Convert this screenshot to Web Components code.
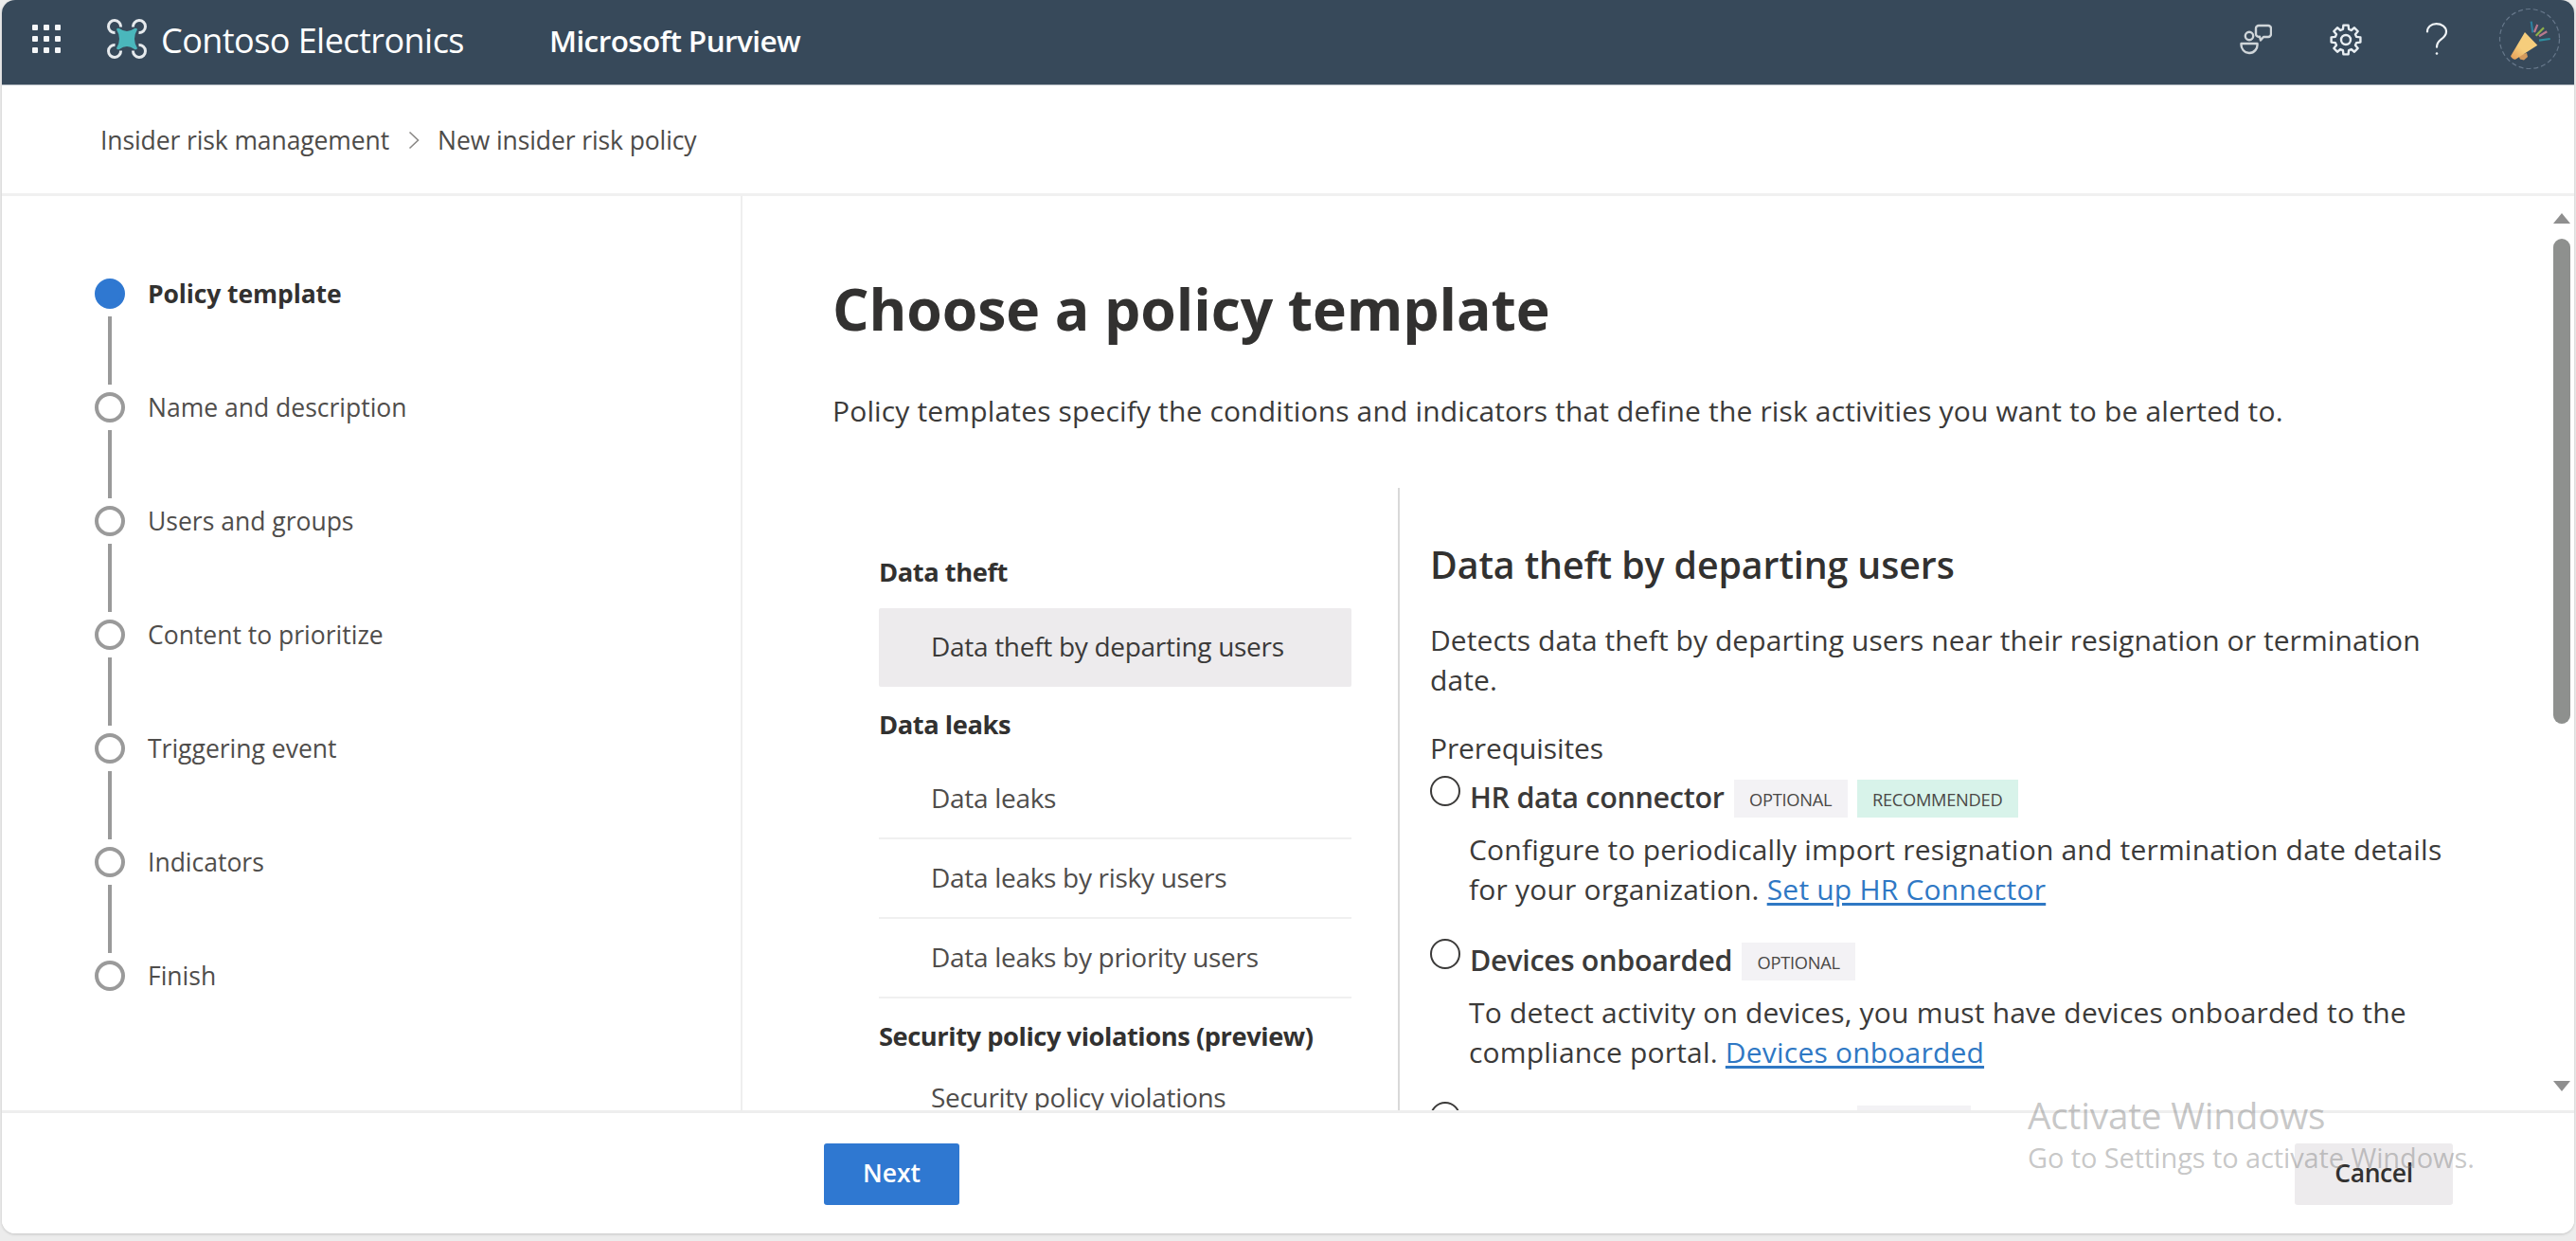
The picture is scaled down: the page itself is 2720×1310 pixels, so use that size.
<!DOCTYPE html>
<html lang="en"><head><meta charset="utf-8"><title>New insider risk policy</title>
<style>
html,body{margin:0;height:100%;background:#ececec;overflow:hidden}
body{font-family:"Open Sans","Noto Sans","Liberation Sans",sans-serif;color:#323130}
</style></head><body>
<x-shell>
  <x-topbar slot="top"></x-topbar>
  <x-breadcrumb slot="crumb"><span>Insider risk management</span><span>New insider risk policy</span></x-breadcrumb>
  <x-stepper slot="steps">
    <x-step active line>Policy template</x-step>
    <x-step line>Name and description</x-step>
    <x-step line>Users and groups</x-step>
    <x-step line>Content to prioritize</x-step>
    <x-step line>Triggering event</x-step>
    <x-step line>Indicators</x-step>
    <x-step>Finish</x-step>
  </x-stepper>
  <x-content slot="content">
    <x-template-list slot="list">
      <x-list-group label="Data theft" tight-selected>
        <x-list-item selected>Data theft by departing users</x-list-item>
      </x-list-group>
      <x-list-group label="Data leaks">
        <x-list-item>Data leaks</x-list-item>
        <x-list-item>Data leaks by risky users</x-list-item>
        <x-list-item>Data leaks by priority users</x-list-item>
      </x-list-group>
      <x-list-group label="Security policy violations (preview)" compact>
        <x-list-item>Security policy violations</x-list-item>
      </x-list-group>
    </x-template-list>
    <x-detail slot="detail">
      <x-prereq name="HR data connector">
        <x-badge slot="badges">Optional</x-badge><x-badge slot="badges" tone="green">Recommended</x-badge>
        Configure to periodically import resignation and termination date details<br>for your organization. <a href="#">Set up HR Connector</a>
      </x-prereq>
      <x-prereq name="Devices onboarded">
        <x-badge slot="badges">Optional</x-badge>
        To detect activity on devices, you must have devices onboarded to the<br>compliance portal. <a href="#">Devices onboarded</a>
      </x-prereq>
      <x-prereq blank><x-badge slot="badges"></x-badge></x-prereq>
    </x-detail>
  </x-content>
  <x-scrollbar slot="scroll"></x-scrollbar>
  <x-footerbar slot="footer">
    <x-button primary>Next</x-button>
    <x-button slot="end">Cancel</x-button>
  </x-footerbar>
  <x-watermark slot="overlay"></x-watermark>
</x-shell>
<script>
function def(name,html,init){
  customElements.define(name,class extends HTMLElement{
    constructor(){super();this.attachShadow({mode:'open'}).innerHTML=typeof html==='function'?html(this):html;}
    connectedCallback(){if(init)init(this,this.shadowRoot);}
  });
}
def('x-shell',`<style>
:host{display:flex;flex-direction:column;box-sizing:border-box;width:2716px;height:1302px;margin:0 2px;background:#fff;border-radius:14px;overflow:hidden;position:relative;box-shadow:0 1px 3px rgba(0,0,0,.18)}
.main{flex:1;min-height:0;display:flex;overflow:hidden}
</style>
<slot name="top"></slot><slot name="crumb"></slot>
<div class="main"><slot name="steps"></slot><slot name="content"></slot><slot name="scroll"></slot></div>
<slot name="footer"></slot><slot name="overlay"></slot>`);

let gear='';(()=>{const c=17,pts=[];for(let i=0;i<8;i++){const a=i*Math.PI/4;[[-.27,11.5],[-.17,15.6],[.17,15.6],[.27,11.5]].forEach(([d,r])=>pts.push((c+r*Math.sin(a+d)).toFixed(1)+' '+(c-r*Math.cos(a+d)).toFixed(1)));}gear='M'+pts.join('L')+'Z';})();
let dots='';[0,12,24].forEach(y=>[1,13,25].forEach(x=>dots+=`<rect x="${x}" y="${y}" width="6" height="6" rx="1"/>`));

def('x-topbar',`<style>
:host{display:flex;align-items:center;box-sizing:border-box;height:90px;flex:none;background:#37495a;border-bottom:1px solid #9aa3ac;color:#fff;padding:0 0 5px 31px}
svg{display:block;flex:none}
.waffle{margin-top:-2px}
.brand{margin:-2px 0 0 48px}
.name{margin-left:15px;width:410px;font-size:36px;letter-spacing:-.55px;white-space:nowrap}
.prod{font-size:31.500px;font-weight:600;letter-spacing:-.6px;white-space:nowrap}
.icons{margin-left:auto;display:flex;align-items:center}
</style>
<svg class="waffle" width="32" height="30" viewBox="0 0 32 30" fill="#f4f6f8">${dots}</svg>
<svg class="brand" width="42" height="42" viewBox="0 0 42 42"><g fill="none" stroke="#e6eaed" stroke-width="3"><path d="M8.500 14.500A6.500 6.500 0 1 1 14.500 8.500"/><path d="M33.500 14.500A6.500 6.500 0 1 0 27.500 8.500"/><path d="M8.500 27.500A6.500 6.500 0 1 0 14.500 33.500"/><path d="M33.500 27.500A6.500 6.500 0 1 1 27.500 33.500"/></g><path d="M10 11Q11 9 13 10Q21 16 29 10Q31 9 32 11Q26 21 32 31Q31 33 29 32Q21 26 13 32Q11 33 10 31Q16 21 10 11Z" fill="#4ab7bc"/></svg>
<span class="name">Contoso Electronics</span>
<span class="prod">Microsoft Purview</span>
<div class="icons">
<svg width="34" height="34" viewBox="0 0 34 34" fill="none" stroke="#cfd5d9" stroke-width="2.4" stroke-linejoin="round"><circle cx="10" cy="13" r="4.2"/><path d="M1.500 21h17c.6 5-3 10-8.500 10S1 26 1.500 21z"/><path d="M20 2h10a3 3 0 0 1 3 3v6a3 3 0 0 1-3 3h-5l-3 3.500-1-3.800A3 3 0 0 1 17 11V5a3 3 0 0 1 3-3z"/></svg>
<svg style="margin-left:60px" width="36" height="36" viewBox="-1 -1 36 36" fill="none" stroke="#e8eef2" stroke-width="2.4" stroke-linejoin="round"><path d="${gear}"/><circle cx="17" cy="17" r="5"/></svg>
<svg style="margin-left:65.500px" width="24" height="36" viewBox="0 0 24 36" fill="none" stroke="#eef2f5" stroke-width="2.2" stroke-linecap="round"><path d="M2 9.500C2 4.500 6 1.200 11.500 1.200S22 4.500 22 9.500c0 4-2.600 6-5.500 8.200-3 2.300-4.500 4.400-4.500 8"/><circle cx="12" cy="32.500" r="1.300" fill="#eef2f5" stroke="none"/></svg>
<svg style="margin:-2px 14px 0 53.500px" width="66" height="66" viewBox="0 0 66 66" fill="none"><defs><linearGradient id="m" x1="0" y1="1" x2="1" y2="0"><stop offset="0" stop-color="#e39a55"/><stop offset=".4" stop-color="#f6cd7c"/><stop offset="1" stop-color="#f6cd7c"/></linearGradient></defs><circle cx="33" cy="33" r="31.500" stroke="#66778a" stroke-width="1.200" stroke-dasharray="5 3"/><path d="M21 50l9-2 1 4-4 3.500-4-1z" fill="#d49a5c"/><path d="M28 26L41.300 39.700 18 54.700Q15 55 13 51.300z" fill="url(#m)"/><g stroke-width="2.200"><path d="M34.700 14.700L36.300 26.300" stroke="#2f7f9e"/><path d="M41.300 18L38 26" stroke="#b9798e"/><path d="M48 21.300L39.700 29.700" stroke="#8fb04a"/><path d="M51.300 25.300L43 30.300" stroke="#b9798e"/><path d="M54.700 33L43 34.700" stroke="#2f8fa0"/></g></svg>
</div>`);

def('x-breadcrumb',`<style>
:host{display:flex;align-items:center;box-sizing:border-box;height:117px;flex:none;padding:1px 0 0 104px;border-bottom:3px solid #f0f0f0;font-size:26.500px;letter-spacing:-.1px;color:#4d4b49;white-space:nowrap}
</style><slot></slot>`,(el)=>{
  const s=el.children[0];if(s&&!s.nextElementSibling.matches('svg')){
    s.insertAdjacentHTML('afterend','<svg xmlns="http://www.w3.org/2000/svg" width="12" height="20" viewBox="0 0 12 20" fill="none" stroke="#8a8886" stroke-width="1.600" style="margin:0 19px 0 20px"><path d="M1.500 1.500L10.500 10L1.500 18.500"/></svg>');
  }
});

def('x-stepper',`<style>
:host{display:block;box-sizing:border-box;width:782px;flex:none;padding:87px 0 0 98px;border-right:2px solid #eeeeee}
</style><slot></slot>`);
def('x-step',`<style>
:host{display:grid;grid-template-columns:32px 1fr;column-gap:24px;grid-template-rows:32px 88px;align-items:center;font-size:26.500px;letter-spacing:0;color:#4f4d4b;white-space:nowrap}
:host([active]){font-weight:700;color:#323130;letter-spacing:-.1px}
.dot{box-sizing:border-box;width:32px;height:32px;border-radius:50%;border:4px solid #9a9a9a;background:#fff}
:host([active]) .dot{background:#2f78d1;border-color:#2f78d1}
.line{display:none;justify-self:center;width:4px;height:72px;background:#9a9a9a}
:host([line]) .line{display:block}
</style><span class="dot"></span><span><slot></slot></span><span class="line"></span>`);

def('x-content',`<style>
:host{display:block;flex:1;min-width:0;box-sizing:border-box;padding:79px 0 0 95px;overflow:hidden}
h1{margin:0;font-size:60.700px;font-weight:700;line-height:80px;letter-spacing:-.1px;color:#323130;white-space:nowrap}
p{margin:48px 0 61px;font-size:30px;line-height:40px;letter-spacing:.15px;color:#3b3a39;white-space:nowrap}
.cols{display:flex;align-items:stretch;height:700px}
</style><h1>Choose a policy template</h1>
<p>Policy templates specify the conditions and indicators that define the risk activities you want to be alerted to.</p>
<div class="cols"><slot name="list"></slot><slot name="detail"></slot></div>`);

def('x-template-list',`<style>
:host{display:block;box-sizing:border-box;width:599px;flex:none;padding:69px 49px 0 49px;border-right:2px solid #d9d9d9}
</style><slot></slot>`);
def('x-list-group',(el)=>`<style>
:host{display:block;margin-bottom:20px}
.h{font-size:27.300px;font-weight:700;line-height:40px;letter-spacing:-.45px;color:#323130;margin-bottom:17px;white-space:nowrap}
:host([tight-selected]) .h{margin-bottom:18px}
:host([compact]) .h{margin-bottom:4px}
</style><div class="h">${el.getAttribute('label')}</div><slot></slot>`);
def('x-list-item',`<style>
:host{display:flex;align-items:center;box-sizing:border-box;height:84px;padding:0 0 2px 55px;border-bottom:2px solid #f0f0f0;font-size:28px;letter-spacing:-.3px;color:#4f4d4b;white-space:nowrap}
:host([selected]){height:83px;margin-bottom:2px;padding-bottom:3px;background:#edebed;border:0;border-radius:2px;color:#3b3a39}
</style><slot></slot>`);

def('x-detail',`<style>
:host{display:block;flex:1;min-width:0;padding:53px 0 0 32px;color:#3b3a39}
h2{margin:0;font-size:39.300px;font-weight:600;line-height:56px;letter-spacing:-.1px;color:#323130;white-space:nowrap}
p{margin:31px 0 31px;font-size:30px;line-height:41.500px;letter-spacing:.08px;white-space:nowrap}
.pre{font-size:30px;line-height:42px;letter-spacing:-.1px;margin-bottom:8px}
</style><h2>Data theft by departing users</h2>
<p>Detects data theft by departing users near their resignation or termination<br>date.</p>
<div class="pre">Prerequisites</div><slot></slot>`);

def('x-prereq',(el)=>`<style>
:host{display:block;margin-bottom:31px}
.row{display:flex;align-items:flex-start;height:44px}
.radio{box-sizing:border-box;width:32px;height:32px;flex:none;border-radius:50%;border:2px solid #3b3a39;background:#fff;margin-right:10px}
.t{font-size:30.500px;font-weight:600;line-height:44px;letter-spacing:-.3px;color:#3b3a39;white-space:nowrap;margin-right:10px}
:host([blank]) .t{width:409px;margin-right:0}
.badges{display:flex;gap:10px;margin-top:4px}
.d{margin:13px 0 0 41px;font-size:30px;line-height:42px;letter-spacing:.2px;color:#3b3a39;white-space:nowrap}
::slotted(a){color:#2f78c4;text-decoration:underline;text-underline-offset:3px}
</style><div class="row"><span class="radio"></span><span class="t">${el.getAttribute('name')||''}</span><span class="badges"><slot name="badges"></slot></span></div><div class="d"><slot></slot></div>`);
def('x-badge',`<style>
:host{display:flex;align-items:center;justify-content:center;box-sizing:border-box;width:120px;height:40px;background:#f3f2f5;font-size:18.300px;letter-spacing:-.3px;text-transform:uppercase;color:#4a4846;white-space:nowrap}
:host([tone=green]){width:170px;background:#d8f3ea}
</style><slot></slot>`);

def('x-scrollbar',`<style>
:host{display:flex;flex-direction:column;align-items:center;box-sizing:border-box;width:24px;flex:none;padding:18px 2px 20px 0}
i{display:block;width:0;height:0;border:9px solid transparent;border-top:0;border-bottom:11px solid #8f8f8f}
i.d{margin-top:auto;border-bottom:0;border-top:11px solid #8f8f8f}
b{display:block;width:18px;height:512px;margin-top:16px;border-radius:9px;background:#8e908e}
</style><i></i><b></b><i class="d"></i>`);

def('x-footerbar',`<style>
:host{display:flex;align-items:flex-start;box-sizing:border-box;height:130px;flex:none;border-top:3px solid #eeeeee;background:#fff;padding:32px 128px 0 868px}
.end{margin-left:auto}
</style><slot></slot><span class="end"><slot name="end"></slot></span>`);
def('x-button',`<style>
:host{display:flex;align-items:center;justify-content:center;box-sizing:border-box;width:167px;height:65px;padding-bottom:3px;border-radius:3px;background:#edebed;color:#323130;font-size:26.500px;font-weight:600;letter-spacing:-.4px}
:host([primary]){width:143px;background:#2f78d1;color:#fff;letter-spacing:0}
</style><slot></slot>`);
def('x-watermark',`<style>
:host{position:absolute;left:2139px;top:1150px;color:rgba(120,120,120,.42);pointer-events:none;white-space:nowrap}
.a{font-size:38.700px;line-height:54px;letter-spacing:-.2px}
.b{font-size:29px;line-height:38px;letter-spacing:-.1px;margin-top:-1px}
</style><div class="a">Activate Windows</div><div class="b">Go to Settings to activate Windows.</div>`);
</script>
</body></html>
